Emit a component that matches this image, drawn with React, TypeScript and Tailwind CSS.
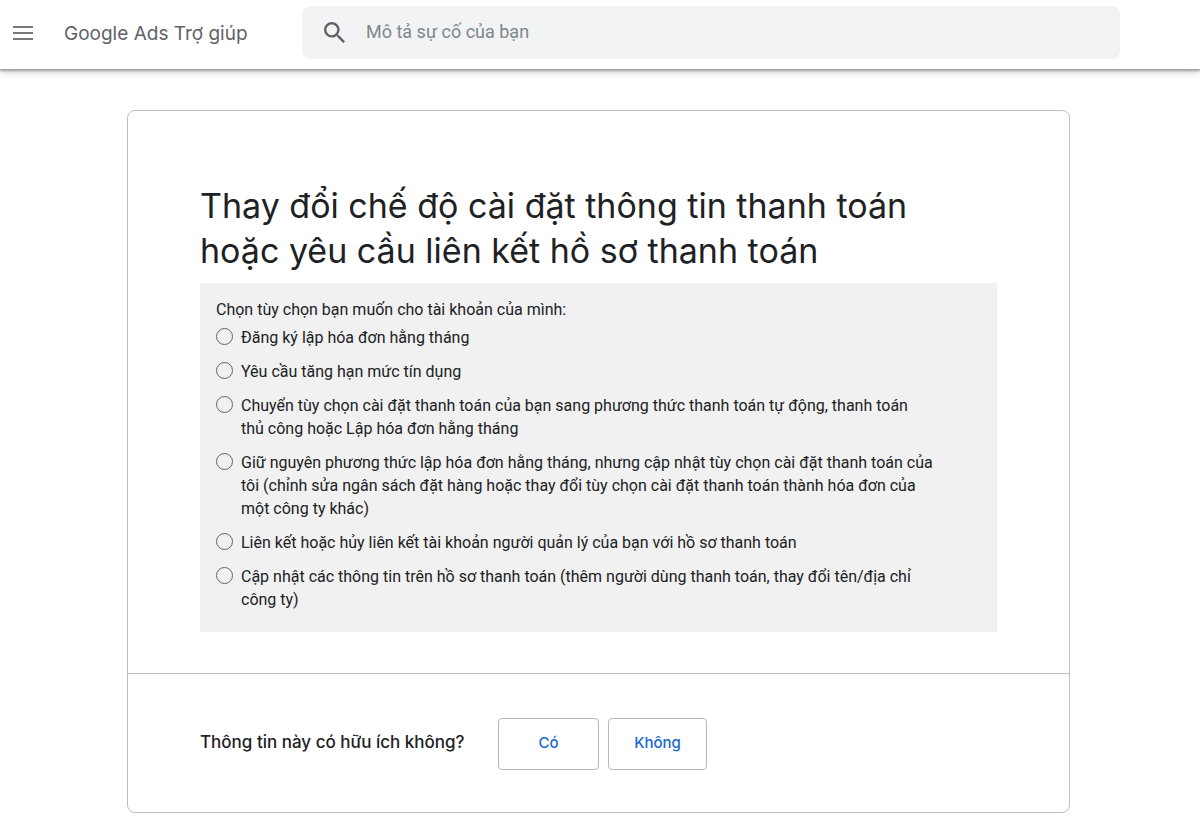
import { useState } from 'react';

const OPTIONS = [
  { id: 'monthly', label: 'Đăng ký lập hóa đơn hằng tháng' },
  { id: 'credit', label: 'Yêu cầu tăng hạn mức tín dụng' },
  {
    id: 'switch',
    label:
      'Chuyển tùy chọn cài đặt thanh toán của bạn sang phương thức thanh toán tự động, thanh toán thủ công hoặc Lập hóa đơn hằng tháng',
  },
  {
    id: 'keep',
    label:
      'Giữ nguyên phương thức lập hóa đơn hằng tháng, nhưng cập nhật tùy chọn cài đặt thanh toán của tôi (chỉnh sửa ngân sách đặt hàng hoặc thay đổi tùy chọn cài đặt thanh toán thành hóa đơn của một công ty khác)',
  },
  { id: 'link', label: 'Liên kết hoặc hủy liên kết tài khoản người quản lý của bạn với hồ sơ thanh toán' },
  {
    id: 'update',
    label: 'Cập nhật các thông tin trên hồ sơ thanh toán (thêm người dùng thanh toán, thay đổi tên/địa chỉ công ty)',
  },
];

function Header() {
  return (
    <header className="flex h-[69px] items-center bg-white pr-20 pl-3 shadow-[0_2px_2px_rgba(0,0,0,0.28),0_3px_8px_rgba(0,0,0,0.2)]">
      <button type="button" aria-label="Trình đơn chính" className="mb-1 shrink-0">
        <svg width="22" height="16" viewBox="0 0 22 16" fill="#77787b">
          <path d="M1 1h20v2H1zM1 7h20v2H1zM1 13h20v2H1z" />
        </svg>
      </button>
      <a href="#" className="ml-[30px] w-[238px] shrink-0 text-[19px] text-[#5f6368]">
        Google Ads Trợ giúp
      </a>
      <form role="search" className="mb-1 flex h-[53px] flex-1 items-center rounded-lg bg-[#f1f3f4] pl-[22px]">
        <svg width="21" height="21" viewBox="3 3 17.49 17.49" fill="#5f6368" className="shrink-0">
          <path d="M15.5 14h-.79l-.28-.27A6.471 6.471 0 0 0 16 9.5 6.5 6.5 0 1 0 9.5 16c1.61 0 3.09-.59 4.23-1.57l.27.28v.79l5 4.99L20.49 19l-4.99-5zm-6 0C7.01 14 5 11.99 5 9.5S7.01 5 9.5 5 14 7.01 14 9.5 11.99 14 9.5 14z" />
        </svg>
        <input
          type="search"
          aria-label="Mô tả sự cố của bạn"
          placeholder="Mô tả sự cố của bạn"
          className="mb-[2px] ml-[21px] min-w-0 flex-1 bg-transparent font-[Roboto,sans-serif] text-lg outline-none placeholder:text-[#80868b]"
        />
      </form>
    </header>
  );
}

function PaymentOptions() {
  const [selected, setSelected] = useState('');

  return (
    <fieldset className="bg-[#f1f1f1] px-4 pt-[15px] pb-[21px] font-[Roboto,sans-serif] text-base leading-[23px] text-[#202124]">
      <legend className="float-left mb-[5px] w-full">Chọn tùy chọn bạn muốn cho tài khoản của mình:</legend>
      <div className="clear-both flex flex-col gap-[11px]">
        {OPTIONS.map((option) => (
          <label key={option.id} className="flex items-start gap-2">
            <input
              type="radio"
              name="payment-option"
              value={option.id}
              checked={selected === option.id}
              onChange={() => setSelected(option.id)}
              className="mt-[2px] size-[17px] shrink-0 appearance-none rounded-full border border-[#5f6368] checked:border-[5px] checked:border-[#1967d2]"
            />
            <span className="max-w-[692px]">{option.label}</span>
          </label>
        ))}
      </div>
    </fieldset>
  );
}

function Feedback() {
  const buttonClass =
    'h-[52px] rounded border border-[#b5b7ba] pb-[2px] text-[15px] font-medium text-[#1967d2] hover:bg-[#f6fafe]';

  return (
    <div className="flex items-center border-t border-[#bdbdbd] px-[72px] pt-11 pb-[42px]">
      <p className="mb-[2px] w-[298px] text-[17px] font-medium text-[#202124]">Thông tin này có hữu ích không?</p>
      <div className="flex gap-[9px]">
        <button type="button" className={`${buttonClass} w-[101px]`}>
          Có
        </button>
        <button type="button" className={`${buttonClass} w-[99px]`}>
          Không
        </button>
      </div>
    </div>
  );
}

export default function App() {
  return (
    <div className="bg-white font-[Inter,sans-serif]">
      <Header />
      <main className="pt-[41px] pr-[130px] pb-[7px] pl-[127px]">
        <article className="rounded-lg border border-[#bdbdbd]">
          <div className="px-[72px] pt-[72px] pb-[41px]">
            <h1 className="mb-[10px] max-w-[760px] text-[34px] leading-[45px] text-[#202124]">
              Thay đổi chế độ cài đặt thông tin thanh toán hoặc yêu cầu liên kết hồ sơ thanh toán
            </h1>
            <PaymentOptions />
          </div>
          <Feedback />
        </article>
      </main>
    </div>
  );
}
